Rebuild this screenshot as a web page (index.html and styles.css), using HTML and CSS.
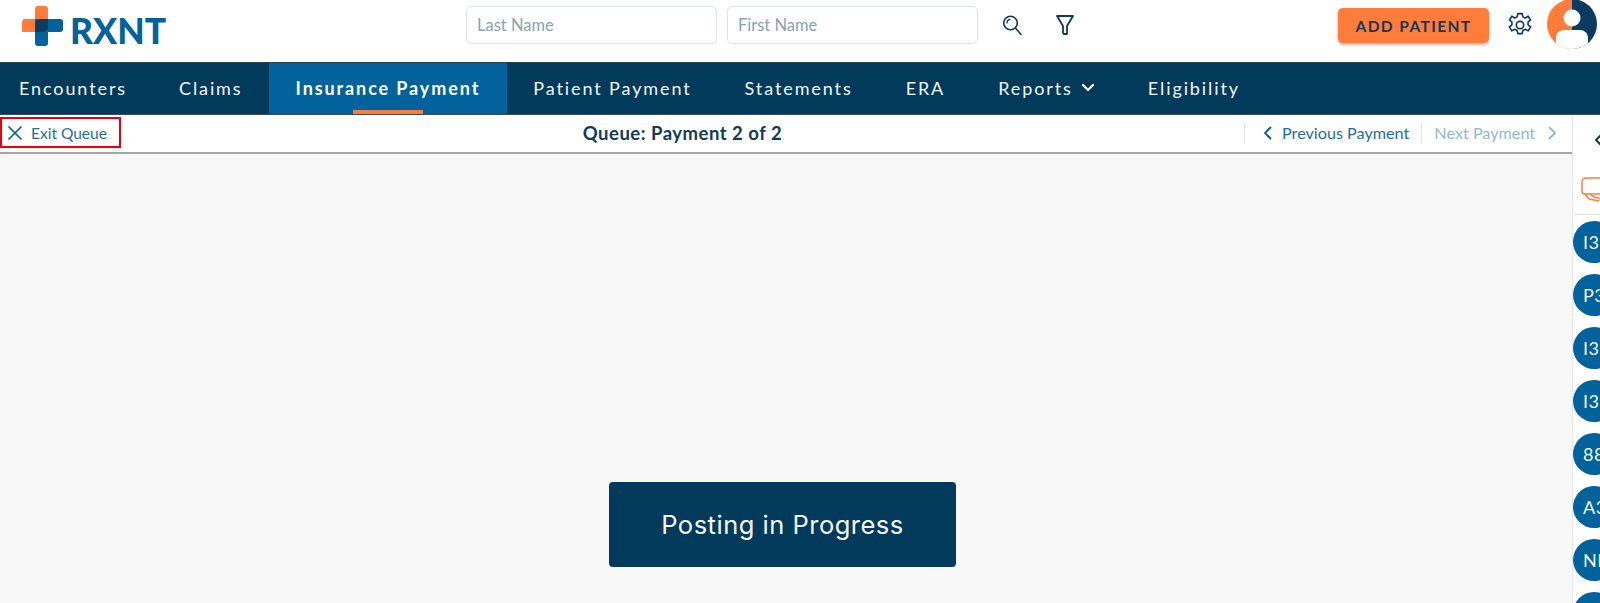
FILE: index.html
```html
<!DOCTYPE html>
<html lang="en">
<head>
<meta charset="utf-8">
<title>Insurance Payment Queue</title>
<link rel="stylesheet" href="styles.css">
</head>
<body>
<header class="topbar">
  <a class="logo">
    <svg class="logo-mark" width="41" height="40" viewBox="0 0 41 40">
      <path d="M13 3a3 3 0 0 1 3-3h7a3 3 0 0 1 3 3v23H0v-10a3 3 0 0 1 3-3h10z" fill="#ff7c3b"/>
      <path d="M13 13h25a3 3 0 0 1 3 3v7a3 3 0 0 1-3 3H26v11a3 3 0 0 1-3 3h-7a3 3 0 0 1-3-3z" fill="#02629b"/>
      <path d="M13 18a5 5 0 0 1 5-5h8v8a5 5 0 0 1-5 5h-8z" fill="#0c3c60"/>
    </svg>
    <span class="logo-text">RXNT</span>
  </a>
  <div class="search">
    <input class="field" placeholder="Last Name">
    <input class="field" placeholder="First Name">
    <svg class="tool tool-search" width="22" height="22" viewBox="0 0 22 22" fill="none" stroke="#0f3a5a" stroke-width="1.6" stroke-linecap="round">
      <circle cx="9.5" cy="9" r="6.8"/>
      <path d="M14.5 14l5.5 6.5"/>
      <path d="M6 9a3.6 3.6 0 0 1 3-3.6" stroke-width="1.2"/>
    </svg>
    <svg class="tool tool-filter" width="20" height="22" viewBox="0 0 20 22" fill="none" stroke="#0f3a5a" stroke-width="1.8" stroke-linejoin="round">
      <path d="M2 2h16l-6 10v8h-3l-1-1v-7z"/>
    </svg>
  </div>
  <div class="actions">
    <button class="add-btn">ADD PATIENT</button>
    <svg class="gear" width="26" height="26" viewBox="0 0 24 24" fill="none" stroke="#0f3a5a" stroke-width="1.5" stroke-linejoin="round">
      <circle cx="12" cy="12" r="3.4"/>
      <path d="M10 1.5h4l.6 3 2.3 1 2.6-1.6 2.2 3.4-2.3 2 .1 2.5 2.3 2-2.2 3.6-2.7-1.5-2.2 1-.7 3.1h-4l-.7-3.1-2.2-1-2.7 1.5-2.2-3.6 2.3-2 .1-2.5-2.3-2 2.2-3.4 2.6 1.6 2.3-1z"/>
    </svg>
    <svg class="avatar" width="50" height="50" viewBox="0 0 50 50">
      <defs><clipPath id="avatar-clip"><circle cx="25" cy="25" r="25"/></clipPath></defs>
      <g clip-path="url(#avatar-clip)">
        <rect width="25" height="50" fill="#ff7c3b"/>
        <rect x="25" width="25" height="50" fill="#0b3b5e"/>
        <circle cx="25" cy="19" r="8.5" fill="#fff"/>
        <path d="M9 50V39a8 8 0 0 1 8-8h16a8 8 0 0 1 8 8v11z" fill="#fff"/>
      </g>
    </svg>
  </div>
</header>
<nav class="nav">
  <a class="nav-item">Encounters</a>
  <a class="nav-item">Claims</a>
  <a class="nav-item is-active">Insurance Payment</a>
  <a class="nav-item">Patient Payment</a>
  <a class="nav-item">Statements</a>
  <a class="nav-item">ERA</a>
  <a class="nav-item">Reports
    <svg class="nav-caret" width="14" height="9" viewBox="0 0 14 9" fill="none" stroke="#fff" stroke-width="2.2" stroke-linecap="round" stroke-linejoin="round"><path d="M2 2l5 5 5-5"/></svg>
  </a>
  <a class="nav-item">Eligibility</a>
</nav>
<div class="workspace">
  <main class="main">
    <div class="queue-bar">
      <a class="exit">
        <svg width="14" height="14" viewBox="0 0 14 14" fill="none" stroke="#02629b" stroke-width="1.7" stroke-linecap="round"><path d="M1 1l12 12M13 1L1 13"/></svg>
        Exit Queue
      </a>
      <div class="queue-title">Queue: Payment 2 of 2</div>
      <div class="pager">
        <a class="pager-link">
          <svg width="9" height="14" viewBox="0 0 9 14" fill="none" stroke="#02629b" stroke-width="1.8" stroke-linecap="round" stroke-linejoin="round"><path d="M7.5 1.5L2 7l5.5 5.5"/></svg>
          Previous Payment
        </a>
        <a class="pager-link is-disabled">
          Next Payment
          <svg width="9" height="14" viewBox="0 0 9 14" fill="none" stroke="#8fb8d4" stroke-width="1.8" stroke-linecap="round" stroke-linejoin="round"><path d="M1.5 1.5L7 7l-5.5 5.5"/></svg>
        </a>
      </div>
    </div>
    <div class="stage">
      <div class="progress">Posting in Progress</div>
    </div>
  </main>
  <aside class="side">
    <svg class="side-chevron" width="9" height="14" viewBox="0 0 9 14" fill="none" stroke="#12402a" stroke-width="2" stroke-linecap="round" stroke-linejoin="round"><path d="M7 2L2 7l5 5"/></svg>
    <svg class="side-chat" width="28" height="26" viewBox="0 0 28 26" fill="none" stroke="#ff7c3b" stroke-width="1.5" stroke-linejoin="round"><path d="M5 1h26v16H4a3 3 0 0 1-3-3V5a4 4 0 0 1 4-4z"/><path d="M4 17l4 5 10 2"/><path d="M9 17l4 3 8 2"/></svg>
    <div class="side-rule"></div>
    <div class="badges">
      <div class="badge">I3</div>
      <div class="badge">P3</div>
      <div class="badge">I3</div>
      <div class="badge">I3</div>
      <div class="badge">88</div>
      <div class="badge">A3</div>
      <div class="badge">NE</div>
      <div class="badge"></div>
    </div>
  </aside>
</div>
</body>
</html>
```

FILE: styles.css
```css
* { box-sizing: border-box; }
html, body { margin: 0; height: 100%; overflow: hidden; }
body {
  display: flex;
  flex-direction: column;
  width: 1600px;
  height: 603px;
  font-family: "Lato", "Noto Sans", sans-serif;
  background: #fff;
}
a { color: inherit; text-decoration: none; }

.topbar {
  display: flex;
  align-items: center;
  flex: none;
  height: 63px;
  padding-left: 22px;
  background: #fff;
  border-bottom: 1px solid #2b3f50;
}
.logo { display: flex; align-items: flex-start; flex: none; width: 444px; height: 62px; padding-top: 6px; }
.logo-mark { flex: none; }
.logo-text {
  margin: 7px 0 0 7px;
  font-size: 35.5px;
  line-height: 36px;
  font-weight: 900;
  letter-spacing: 0;
  color: #02629b;
}
.search { display: flex; align-items: center; gap: 10px; }
.field {
  width: 251px;
  height: 38px;
  margin-top: -12px;
  padding: 0 10px;
  border: 1px solid #dfe4e8;
  border-radius: 5px;
  font: 16.5px "Lato", sans-serif;
  background: #fff;
  outline: none;
}
.field::placeholder { color: #88a3b5; opacity: 1; }
.tool { flex: none; margin-top: -12px; }
.tool-search { margin-left: 13px; }
.tool-filter { margin-left: 22px; }
.actions { display: flex; align-items: center; margin-left: auto; height: 62px; }
.add-btn {
  width: 151px;
  height: 35px;
  margin: -11px 0 0 0;
  border: 0;
  border-radius: 5px;
  background: #ff7c3b;
  box-shadow: 0 2px 3px rgba(0, 0, 0, 0.3);
  color: #12385a;
  font: 700 15.5px "Lato", sans-serif;
  letter-spacing: 1.4px;
}
.gear { margin: -12px 0 0 18px; flex: none; }
.avatar { margin: -15px 3px 0 14px; flex: none; }

.nav {
  display: flex;
  flex: none;
  height: 52px;
  background: #023a5c;
  border-bottom: 1px solid #3a4d5c;
}
.nav-item {
  display: flex;
  align-items: center;
  gap: 8px;
  position: relative;
  padding: 0 26.5px 2px;
  font-size: 18px;
  letter-spacing: 1.9px;
  color: #f2f6f8;
}
.nav-item:first-child { padding-left: 19px; padding-right: 25.5px; }
.nav-item.is-active { background: #02629b; font-weight: 700; color: #fff; }
.nav-item.is-active::after {
  content: "";
  position: absolute;
  left: 84px;
  bottom: 0;
  width: 70px;
  height: 4px;
  background: #ff7c3b;
}
.nav-caret { flex: none; }

.workspace { display: flex; flex: 1; min-height: 0; }
.main { display: flex; flex-direction: column; flex: none; width: 1572px; }
.queue-bar {
  display: flex;
  align-items: center;
  flex: none;
  height: 39px;
  background: #fff;
  border-bottom: 2px solid #a6a6a6;
}
.exit {
  display: flex;
  align-items: center;
  gap: 9px;
  flex: none;
  width: 121px;
  height: 31px;
  margin-top: -2px;
  padding-left: 6px;
  border: 2px solid #e8000f;
  font-size: 15.5px;
  color: #1e6ea3;
}
.queue-title {
  flex: 1;
  margin-top: -2px;
  text-align: center;
  font-size: 18.5px;
  font-weight: 700;
  letter-spacing: 0.5px;
  color: #0f3a5a;
}
.pager { display: flex; flex: none; width: 328px; height: 22px; margin-top: -2px; }
.pager-link {
  display: flex;
  align-items: center;
  gap: 10px;
  padding: 0 12px 0 18px;
  border-left: 1px solid #e2e6e8;
  font-size: 16.2px;
  color: #1e6ea3;
}
.pager-link.is-disabled { padding-left: 12px; gap: 13px; color: #8fb8d4; }
.stage {
  flex: 1;
  padding: 328px 0 0 609px;
  background: #f8f8f8;
}
.progress {
  display: flex;
  align-items: center;
  justify-content: center;
  width: 347px;
  height: 85px;
  border-radius: 4px;
  background: #023a5c;
  color: #f6f8fa;
  font-family: "Inter", sans-serif;
  font-size: 25.5px;
  letter-spacing: 0.5px;
}
.side {
  flex: 1;
  min-width: 0;
  overflow: hidden;
  padding: 0 0 0 2px;
  background: #fff;
  box-shadow: inset 1px 0 0 #e6e6e6;
}
.side-chevron { display: block; margin: 18px 0 0 20px; }
.side-chat { display: block; margin: 30px 0 0 7px; }
.side-rule { height: 1px; margin: 11px 0 0 0; background: #e2e2e2; }
.badges { display: flex; flex-direction: column; gap: 11px; margin-top: 6px; width: 60px; margin-left: -1px; }
.badge {
  display: flex;
  align-items: center;
  justify-content: flex-start;
  width: 42px;
  height: 42px;
  padding-left: 10px;
  border-radius: 50%;
  background: #02629b;
  color: #f6f8fa;
  font-size: 18px;
  letter-spacing: 0.5px;
  flex: none;
}
```
